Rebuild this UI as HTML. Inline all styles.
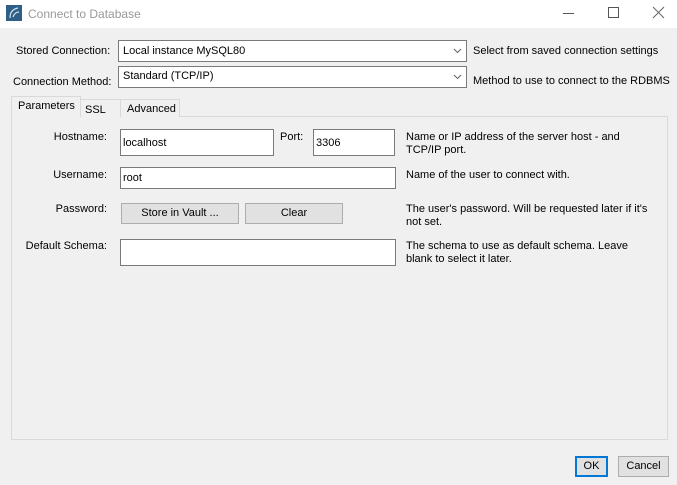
<!DOCTYPE html><html><head><style>
*{box-sizing:border-box;margin:0;padding:0}
body{width:677px;height:485px;background:#f0f0f0;font-family:"Liberation Sans",sans-serif;font-size:11px;color:#000;position:relative;overflow:hidden}
.a{position:absolute;white-space:nowrap}
.tb{position:absolute;left:0;top:0;width:677px;height:28px;background:#fff}
.in{position:absolute;background:#fff;border:1px solid #7a7a7a;padding:0 2px;line-height:26px}
.btn{position:absolute;background:#e1e1e1;border:1px solid #adadad;text-align:center}
.combo{position:absolute;background:#fff;border:1px solid #7a7a7a;padding-left:4px}
.lbl{position:absolute;text-align:right;white-space:nowrap}
</style></head><body>
<div class="tb"></div>
<svg class="a" style="left:6px;top:5px" width="16" height="16"><rect width="16" height="16" fill="#2f5f86"/><path d="M4 13 C4 7 7 4 12 3 M7 12 C8 9 10 7 13 7" stroke="#cfe0ee" fill="none" stroke-width="1.2"/></svg>
<div class="a" style="left:28px;top:7px;color:#999;font-size:12px">Connect to Database</div>
<div class="a" style="left:563px;top:13px;width:11px;height:1px;background:#555"></div>
<div class="a" style="left:608px;top:7px;width:11px;height:11px;border:1px solid #555"></div>
<svg class="a" style="left:652px;top:6px" width="13" height="13"><path d="M1 1L12 12M12 1L1 12" stroke="#666" stroke-width="1"/></svg>

<div class="a" style="left:16px;top:45px">Stored Connection:</div>
<div class="combo" style="left:118px;top:40px;width:349px;height:22px;line-height:20px">Local instance MySQL80</div>
<svg class="a" style="left:453px;top:48px" width="9" height="6"><path d="M1 1L4.5 4.5L8 1" stroke="#666" fill="none"/></svg>
<div class="a" style="left:473px;top:45px">Select from saved connection settings</div>
<div class="a" style="left:13px;top:76px">Connection Method:</div>
<div class="combo" style="left:118px;top:66px;width:349px;height:22px;line-height:18px">Standard (TCP/IP)</div>
<svg class="a" style="left:453px;top:74px" width="9" height="6"><path d="M1 1L4.5 4.5L8 1" stroke="#666" fill="none"/></svg>
<div class="a" style="left:473px;top:75px">Method to use to connect to the RDBMS</div>

<div class="a" style="left:11px;top:116px;width:657px;height:324px;border:1px solid #d9d9d9;background:#f0f0f0"></div>
<div class="a" style="left:80px;top:99px;width:41px;height:18px;border:1px solid #d9d9d9;border-bottom:none;background:#f0f0f0;padding:4px 0 0 4px">SSL</div>
<div class="a" style="left:120px;top:99px;width:60px;height:18px;border:1px solid #d9d9d9;border-bottom:none;background:#f0f0f0;padding:3px 0 0 6px">Advanced</div>
<div class="a" style="left:11px;top:96px;width:70px;height:21px;border:1px solid #d9d9d9;border-bottom:none;background:#f0f0f0;padding:3px 0 0 6px">Parameters</div>

<div class="lbl" style="left:20px;width:87px;top:131px">Hostname:</div>
<div class="in" style="left:120px;top:129px;width:154px;height:27px">localhost</div>
<div class="a" style="left:280px;top:131px">Port:</div>
<div class="in" style="left:313px;top:129px;width:82px;height:27px">3306</div>
<div class="a" style="left:406px;top:131px;line-height:13px">Name or IP address of the server host - and<br>TCP/IP port.</div>
<div class="lbl" style="left:20px;width:87px;top:169px">Username:</div>
<div class="in" style="left:120px;top:167px;width:276px;height:22px;line-height:20px">root</div>
<div class="a" style="left:406px;top:169px">Name of the user to connect with.</div>
<div class="lbl" style="left:20px;width:87px;top:203px">Password:</div>
<div class="btn" style="left:121px;top:203px;width:118px;height:21px;line-height:19px">Store in Vault ...</div>
<div class="btn" style="left:245px;top:203px;width:98px;height:21px;line-height:19px">Clear</div>
<div class="a" style="left:406px;top:203px;line-height:13px">The user's password. Will be requested later if it's<br>not set.</div>
<div class="lbl" style="left:20px;width:87px;top:240px">Default Schema:</div>
<div class="in" style="left:120px;top:239px;width:276px;height:27px"></div>
<div class="a" style="left:406px;top:240px;line-height:13px">The schema to use as default schema. Leave<br>blank to select it later.</div>

<div class="btn" style="left:575px;top:456px;width:33px;height:21px;border:2px solid #0078d7;line-height:17px">OK</div>
<div class="btn" style="left:618px;top:456px;width:51px;height:21px;line-height:19px">Cancel</div>
</body></html>
